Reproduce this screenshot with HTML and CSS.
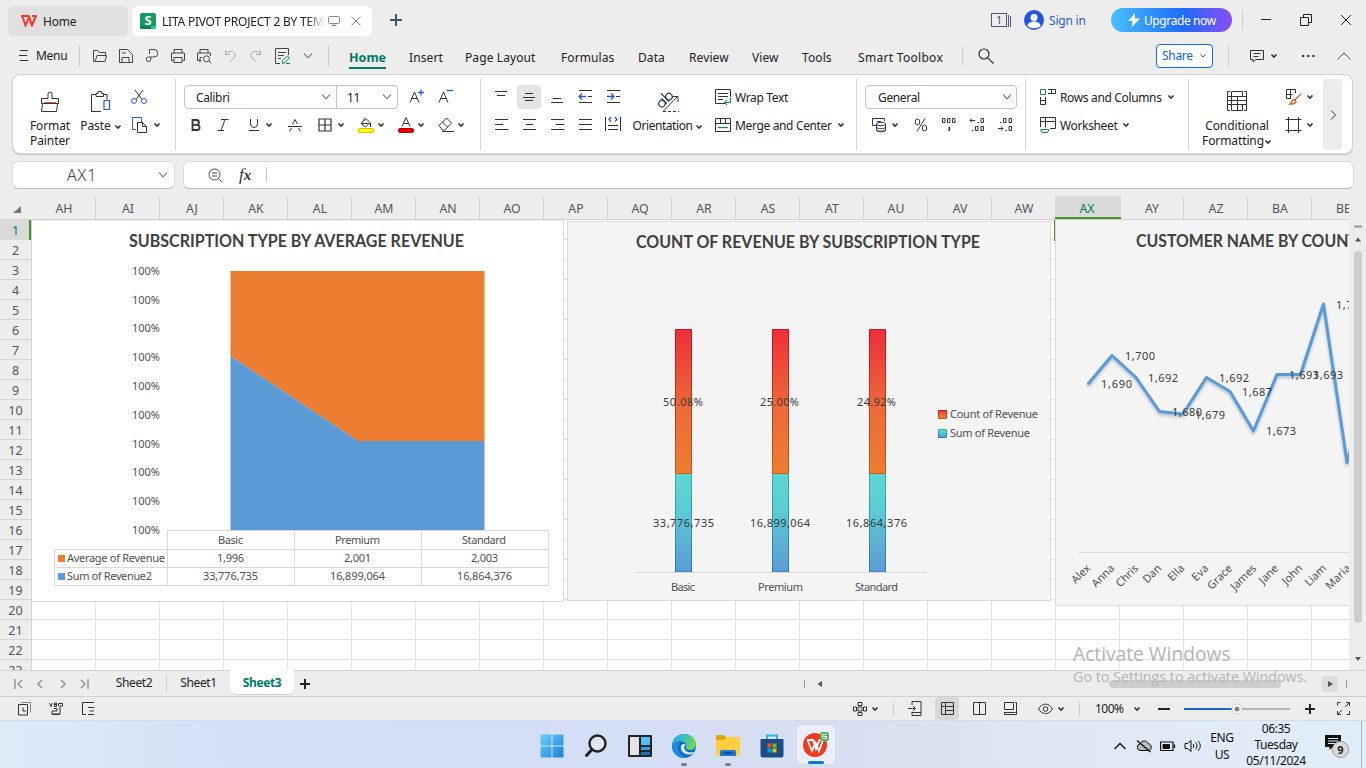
FILE: index.html
```html
<!DOCTYPE html>
<html lang="en">
<head>
<meta charset="utf-8">
<title>LITA PIVOT PROJECT 2</title>
<link rel="stylesheet" href="styles.css">
</head>
<body>
<svg class="defs" width="0" height="0">
  <defs>
    <symbol id="chev" viewBox="0 0 8 8"><path d="M1.500 2.500 4 5l2.500-2.500" fill="none" stroke="#333" stroke-width="1.600"/></symbol>
    <symbol id="drop" viewBox="0 0 10 8"><path d="M1 1.500 5 5.800 9 1.500" fill="none" stroke="#666" stroke-width="1.100"/></symbol>
    <linearGradient id="warm" x1="0" y1="0" x2="0" y2="1"><stop offset="0" stop-color="#ee2f3c"/><stop offset=".55" stop-color="#ec6b38"/><stop offset="1" stop-color="#ed7d31"/></linearGradient>
    <linearGradient id="cool" x1="0" y1="0" x2="0" y2="1"><stop offset="0" stop-color="#5bd6d3"/><stop offset=".3" stop-color="#5bd0d3"/><stop offset="1" stop-color="#5b9bd5"/></linearGradient>
    <linearGradient id="warmLine" x1="0" y1="0" x2="0" y2="1"><stop offset="0" stop-color="#c9101c"/><stop offset="1" stop-color="#c55a11"/></linearGradient>
    <linearGradient id="coolLine" x1="0" y1="0" x2="0" y2="1"><stop offset="0" stop-color="#2bb5b2"/><stop offset="1" stop-color="#2e75b6"/></linearGradient>
  </defs>
</svg>

<header class="titlebar">
  <div class="wtab home"><svg width="16" height="12" viewBox="0 0 16 12"><path d="M0 1h7.500M1.200 1l3.300 9.500L8.300 2l2.600 8.500L15 1h-4" fill="none" stroke="#f5392b" stroke-width="2"/></svg><span>Home</span></div>
  <div class="wtab doc">
    <svg width="16" height="16"><rect width="16" height="16" rx="2" fill="#149b64"/><path d="M0 13h11v3H2a2 2 0 0 1-2-2z" fill="#0b8453"/><path d="M11 13h5v1a2 2 0 0 1-2 2h-3z" fill="#2bc486"/><text x="8" y="12" text-anchor="middle" class="s-mark">S</text></svg>
    <span class="doc-name">LITA PIVOT PROJECT 2 BY TEMNI</span>
    <svg width="12" height="12" fill="none" stroke="#888"><rect x=".5" y="1.500" width="11" height="7" rx="1"/><path d="M3.500 10.500h5M6 8.500v2"/></svg>
    <svg class="tab-x" width="10" height="10" stroke="#888"><path d="M.5.5l9 9M9.500.5l-9 9"/></svg>
  </div>
  <div class="c"><svg width="12" height="12" stroke="#44546f" stroke-width="2"><path d="M6 0v12M0 6h12"/></svg></div>
  <i></i>
  <div class="c"><svg width="21" height="14" fill="none" stroke="#4b5b78"><rect x=".5" y=".5" width="15" height="13"/><path d="M17.500 2v12M19.500 3v11"/><text x="8" y="11" text-anchor="middle" class="cnt">1</text></svg></div>
  <div class="c"><svg width="20" height="20"><circle cx="10" cy="10" r="10" fill="#2454dc"/><circle cx="10" cy="7.500" r="3.500" fill="#fff"/><path d="M3.500 16c0-6 13-6 13 0-3 3-10 3-13 0z" fill="#fff"/></svg></div>
  <span class="signin">Sign in</span>
  <button class="upgrade"><svg width="12" height="14"><path d="M7 0 0 8h4.500L4 14l8-8.500H7z" fill="#fff"/></svg><span>Upgrade now</span></button>
  <div class="c"><b class="vr"></b></div>
  <div class="c"><svg width="10" height="12" stroke="#222"><path d="M0 5.500h10"/></svg></div>
  <div class="c"><svg width="12" height="12" fill="none" stroke="#222"><path d="M.5 3.500h8v8h-8zM3.500 3.500v-3h8v8h-3"/></svg></div>
  <div class="c"><svg width="10" height="10" stroke="#222"><path d="M0 0l10 10M10 0 0 10"/></svg></div>
</header>

<nav class="menubar">
  <div class="c"><svg width="10" height="13" stroke="#333"><path d="M1 1.500h8M0 6.500h8M1 11.500h8"/></svg></div>
  <span class="menu-t">Menu</span>
  <b class="vr"></b>
  <div class="quick">
    <svg width="16" height="16" viewBox="0 0 16 16"><path d="M3 13.500H1.500v-11h4l2 2h6v3M3 13.500l2-6h9.500l-1.500 6z"/></svg>
    <svg width="16" height="16" viewBox="0 0 16 16"><path d="M1.500 1.500h8l5 5v8h-13zM4 14.500v-5h7v5M4 5h4"/></svg>
    <svg width="16" height="16" viewBox="0 0 16 16"><path d="M5.500 6v-4.500H10a3.500 3.500 0 0 1 0 7.500H4.500a2.300 2.300 0 1 0 2.300 2.300V9"/></svg>
    <svg width="16" height="16" viewBox="0 0 16 16"><path d="M4 5V1.500h8V5M3.500 12.500h-2v-7.500h13v7.500h-2M4 9.500h8v5H4z"/></svg>
    <svg width="16" height="16" viewBox="0 0 16 16"><path d="M4 5V1.500h8V5M5 12.500H1.500V5h13v3M4 14.500V9.500h2M12.800 12.800l2.500 2.500"/><circle cx="10.500" cy="10.800" r="3"/></svg>
    <svg class="off" width="16" height="16" viewBox="0 0 16 16"><path d="M3.500 2v4.500H8M3.500 6.500c3-5 10-3.500 9.500 1-.3 3-3 4-5.500 6.500"/></svg>
    <svg class="off" width="16" height="16" viewBox="0 0 16 16"><path d="M12.500 2v4.500H8M12.500 6.500c-3-5-10-3.500-9.500 1 .3 3 3 4 5.500 6.500"/></svg>
    <svg width="16" height="16" viewBox="0 0 16 16"><path d="M14.500 7V.5h-13v15H6M4 4.500h8M4 7.500h6M4 10.500h3"/><path d="M8.500 15.500v-3l5-4.500 2 2-5 5zM12 15.500h4" stroke="#0c8a5c"/></svg>
    <svg width="10" height="8"><use href="#drop"/></svg>
  </div>
  <div class="c"><b class="vr"></b></div>
  <div class="tabs"><span class="on">Home</span><span>Insert</span><span>Page Layout</span><span>Formulas</span><span>Data</span><span>Review</span><span>View</span><span>Tools</span><span class="wide">Smart Toolbox</span></div>
  <div class="c"><b class="vr"></b></div>
  <div class="c"><svg width="16" height="16" fill="none" stroke="#333" stroke-width="1.200"><circle cx="6" cy="6" r="5"/><path d="M9.800 9.800 15.500 15.500"/></svg></div>
  <i></i>
  <button class="share"><span>Share</span><svg width="8" height="8" fill="none" stroke="#0b62e8"><path d="M1.500 2.500 4 5l2.500-2.500"/></svg></button>
  <div class="c"><b class="vr"></b></div>
  <div class="c"><svg width="16" height="16" fill="none" stroke="#333"><path d="M1.500 2.500h13v9H7l-3 2.500v-2.500H1.500zM4.500 5.500h7M4.500 8.500h5"/></svg></div>
  <div class="c"><svg width="8" height="8"><use href="#chev"/></svg></div>
  <div class="c"><svg width="13" height="4" fill="#333"><path d="M0 1h2.200v2H0zM5.200 1h2.200v2H5.200zM10.400 1h2.200v2h-2.200z"/></svg></div>
  <div class="c"><svg width="14" height="8" fill="none" stroke="#555"><path d="M.5 7.500 7 1l6.500 6.500"/></svg></div>
</nav>

<section class="ribbon">
  <div class="grp g-clip">
    <div class="big"><svg width="20" height="22" viewBox="0 0 20 22"><path d="M8 7.500V3a2 2 0 0 1 4 0v4.500h6.500v5h-17v-5zM2.500 12.500l-1 8h15l1-8"/><path d="M4 11.500h12" stroke="#d9622b"/></svg><span>Format<br>Painter</span></div>
    <div class="big"><svg width="20" height="22" viewBox="0 0 20 22"><path d="M5 3.500H.5v17H10M12 3.500h4v5M5 5.500h7.500v-3H10.500v-2H7v2H5z"/><path d="M13 9.500h5.500v9H13z" stroke="#1f5bd8" stroke-width="1.200"/></svg><span class="tp">Paste<svg class="gap3" width="8" height="8"><use href="#chev"/></svg></span></div>
    <div class="stack">
      <div class="r"><svg width="16" height="16" viewBox="0 0 16 16"><path d="M4 1l7 9.500M12 1 5 10.500"/><g stroke="#2c5bd6"><circle cx="3" cy="12" r="2.500"/><circle cx="13" cy="12" r="2.500"/></g></svg></div>
      <div class="r"><svg width="18" height="17" viewBox="0 0 18 17"><path d="M5 12.500H1.500v-12h9V5" stroke="#2c5bd6"/><path d="M6.500 5.500h5l4 4v6h-9zM11.500 5.500v4h4"/></svg><svg class="gap3" width="8" height="8"><use href="#chev"/></svg></div>
    </div>
  </div>
  <div class="grp g-font">
    <div class="r top">
      <div class="select font"><span>Calibri</span><svg width="10" height="8"><use href="#drop"/></svg></div><div class="select size"><span>11</span><svg width="10" height="8"><use href="#drop"/></svg></div>
      <div class="c"><svg width="16" height="16" viewBox="0 0 16 16"><path d="M1 13.500 5.500 3 10 13.500M2.500 9.500h6"/><path d="M9 3.500h6M12 .5v6" stroke="#1f5bd8" stroke-width="1.300"/></svg></div>
      <div class="c"><svg width="16" height="16" viewBox="0 0 16 16"><path d="M1 13.500 5.500 3 10 13.500M2.500 9.500h6"/><path d="M8.500 1.500h6.500" stroke="#1f5bd8" stroke-width="1.300"/></svg></div>
    </div>
    <div class="r row-font">
      <div class="c"><svg width="10" height="12"><path d="M1.500 1h4a2.300 2.300 0 0 1 0 4.800h-4zM1.500 5.800h4.500a2.500 2.500 0 0 1 0 5.200h-4.500z" stroke-width="1.800"/></svg></div>
      <div class="c"><svg width="12" height="12"><path d="M4 .5h7.500M.5 11.500H7M8 .5l-4 11"/></svg></div>
      <div class="c"><svg width="12" height="12"><path d="M2.500 0v5a3.500 3.500 0 0 0 7 0V0M1 11.500h10"/></svg></div>
      <div class="c"><svg width="8" height="8"><use href="#chev"/></svg></div>
      <div class="c"><svg width="14" height="13"><path d="M0 7.500h14M4.500 5 7 .5 9.500 5M3.500 9 1.500 12.500M10.500 9l2 3.500"/></svg></div>
      <div class="c"><svg width="14" height="14"><path d="M1 1h12v12H1zM7 1v12M1 7h12" stroke-width="1.200"/></svg></div>
      <div class="c"><svg width="8" height="8"><use href="#chev"/></svg></div>
      <div class="c"><svg width="16" height="16"><path d="M4 5l4-3.500 4 4-4.500 4.500L3.500 7zM6 4V1.500M12.500 6v4M3.500 6.500h8"/><rect x=".5" y="11.500" width="15" height="4" rx="1.500" fill="#ff0" stroke="#c8c800"/></svg></div>
      <div class="c"><svg width="8" height="8"><use href="#chev"/></svg></div>
      <div class="c"><svg width="16" height="16"><path d="M4 9.500 8 .5l4 9M5.500 6.500h5"/><rect x=".5" y="11.500" width="15" height="4" rx="1.500" fill="#f00000" stroke="#c00000"/></svg></div>
      <div class="c"><svg width="8" height="8"><use href="#chev"/></svg></div>
      <div class="c"><svg width="16" height="16"><path d="M1 8.500 8.500 1l5 5-6.500 7H4.500zM4.500 5l5 5M4 14.500h12"/></svg></div>
      <div class="c"><svg width="8" height="8"><use href="#chev"/></svg></div>
    </div>
  </div>
  <div class="grp g-align">
    <div class="aligns">
      <svg viewBox="-6 -6 24 24"><path d="M0 .5h12M2 4.500h8"/></svg>
      <svg class="sel" viewBox="-6 -6 24 24"><path d="M2 2.500h8M0 6.500h12M2 9.500h8"/></svg>
      <svg viewBox="-6 -6 24 24"><path d="M2 7.500h8M0 11.500h12"/></svg>
      <svg viewBox="-6 -6 24 24"><path d="M0-.5h13M9 5.500h4M0 11.500h13"/><path d="M7 5.500H0M3 2.500l-3 3 3 3" class="bl"/></svg>
      <svg viewBox="-6 -6 24 24"><path d="M0-.5h13M9 5.500h4M0 11.500h13"/><path d="M0 5.500h7M4 2.500l3 3-3 3" class="bl"/></svg>
      <svg viewBox="-6 -6 24 24"><path d="M0 .5h13M0 5.500h8M0 10.500h13"/></svg>
      <svg viewBox="-6 -6 24 24"><path d="M0 .5h13M3 5.500h7M0 10.500h13"/></svg>
      <svg viewBox="-6 -6 24 24"><path d="M0 .5h13M5 5.500h8M0 10.500h13"/></svg>
      <svg viewBox="-6 -6 24 24"><path d="M0 .5h13M0 5.500h13M0 10.500h13"/></svg>
      <svg viewBox="-6 -6 24 24"><path d="M-1.500-2v14M13.500-2v14M1 6.500h10M1 10.500h10"/><path d="M4-2 2 .500l2 2M8-2l2 2.500-2 2" class="bl"/></svg>
    </div>
    <div class="big"><svg width="24" height="22" viewBox="0 0 24 22" class="navy"><g transform="translate(6 14) rotate(-45)" stroke-width="1.200"><circle cx="1" cy="-1" r="3.300"/><path d="M4.300-5v7.500M7.500-9V2.500"/><circle cx="10.800" cy="-1" r="3.300"/></g><path d="M7 20.500 21 6M16.500 5.500H22V11"/><path d="M7 20.500h16" stroke-dasharray="3 2"/></svg><span class="ori">Orientation<svg class="gap3" width="8" height="8"><use href="#chev"/></svg></span></div>
    <div class="stack wm">
      <div class="r"><svg width="16" height="16"><path d="M10 14.500H.5V.5h15V8M3 4.500h10M3 7.500h10M3 10.500h5"/><path d="M15.500 9v4.500H10M12 11l-2.500 2.500L12 16" stroke="#0c8a5c"/></svg><span>Wrap Text</span></div>
      <div class="r"><svg width="16" height="14"><path d="M.5.5h15v13H.5zM.5 5.500h15M5.500.5v5M10.500.5v5"/><path d="M3 9.500h10" stroke="#0c8a5c" stroke-width="1.300"/></svg><span>Merge and Center</span><svg class="gap4" width="8" height="8"><use href="#chev"/></svg></div>
    </div>
  </div>
  <div class="grp g-num">
    <div class="r top"><div class="select gen"><span>General</span><svg width="10" height="8"><use href="#drop"/></svg></div></div>
    <div class="r row-num">
      <div class="c"><svg width="16" height="16" class="navy"><path d="M5 8.500H1.500v-7h12V4M6 4.500h4"/><ellipse cx="10" cy="7" rx="4.500" ry="1.800"/><path d="M5.500 7v6c0 2.300 9 2.300 9 0V7M5.500 10c0 2.300 9 2.300 9 0M5.500 12.500c0 2.300 9 2.300 9 0"/></svg></div>
      <div class="c"><svg width="8" height="8"><use href="#chev"/></svg></div>
      <div class="c"><svg width="14" height="14"><ellipse cx="3.500" cy="4" rx="2.300" ry="3"/><ellipse cx="10.500" cy="10" rx="2.300" ry="3"/><path d="M11 .5 3 13.500"/></svg></div>
      <div class="c"><svg width="16" height="16"><path d="M1.500 1.500h2.500v4H1.500zM6.500 1.500H9v4H6.500zM11.500 1.500H14v4h-2.500z"/><path d="M7.500 10.500h1v2l-1 1.500" stroke-width="1.500"/></svg></div>
      <div class="c"><svg width="16" height="16"><path d="M1 3.500h5M3 1.500l-2 2 2 2M8.500 5.500h1.500M12 1.500h2.500v4H12zM3 13.500h1.500M6.500 9.500h2.500v4H6.500zM12 9.500h2.500v4H12z"/></svg></div>
      <div class="c"><svg width="16" height="16"><path d="M3 5.500h1.500M6.500 1.500h2.500v4H6.500zM12 1.500h2.500v4H12zM1 11.500h5M4 9.500l2 2-2 2M8.500 13.500h1.500M12 9.500h2.500v4H12z"/></svg></div>
    </div>
  </div>
  <div class="grp g-rows">
    <div class="stack">
      <div class="r"><svg width="16" height="16"><path d="M.5.5h5v5h-5z" stroke="#0c8a5c"/><path d="M8 .5h7.500v4H8M11.500.5v4M.5 8v7.500h5V8M.5 11.500h5"/></svg><span>Rows and Columns</span><svg class="gap4" width="8" height="8"><use href="#chev"/></svg></div>
      <div class="r"><svg width="16" height="16"><path d="M.5 10V.5h15v11H10M.5 4.500h15M5.500.5v10"/><path d="M.5 12.500h8.500l-1.500 3H2z" stroke="#0c8a5c"/></svg><span>Worksheet</span><svg class="gap4" width="8" height="8"><use href="#chev"/></svg></div>
    </div>
  </div>
  <div class="grp g-cond">
    <div class="big"><svg width="20" height="20"><path d="M3 .5H.5v19H3M17 .5h2.500v19H17M4.500.5h11v5h-11zM4.500 5.500v8M4.500 9.500h15M.5 5.500h4M15.500 5.500h4M10.500 5.500v8M.5 13.500h19M4.500 13.500h11v6h-11zM10.500 13.500v6M.5 9.500h4"/></svg><span class="cf">Conditional<br>Formatting<svg width="8" height="8"><use href="#chev"/></svg></span></div>
    <div class="stack">
      <div class="r"><svg width="17" height="16"><path d="M6 9.500H1.500v-9h9V4M1.500 5.500h6M5.500.5v9"/><path d="M16 5 9.500 11M9 10.500l2 2c-1 3-3.500 2.500-6 2.500 1.500-1 1.500-4 4-4.500z" stroke="#cf6128" stroke-width="1.300"/></svg><svg class="gap3" width="8" height="8"><use href="#chev"/></svg></div>
      <div class="r"><svg width="17" height="16"><path d="M.5 2.500h16M.5 13.500h16M3.500 0v16M13.500 0v16"/></svg><svg class="gap3" width="8" height="8"><use href="#chev"/></svg></div>
    </div>
    <div class="more"><svg width="6" height="10"><path d="M1 .5 5.500 5 1 9.500"/></svg></div>
  </div>
</section>

<section class="formula">
  <div class="box namebox"><span>AX1</span><svg width="10" height="8"><use href="#drop"/></svg></div>
  <div class="box fx"><svg width="15" height="15" fill="none" stroke="#444"><circle cx="6.500" cy="6.500" r="5.500"/><path d="M10.500 10.500 14 14M4 5h5M4 8h5"/></svg><em>f<b>x</b></em><i></i></div>
</section>

<section class="colhead">
  <div class="corner"><svg width="8" height="8"><path d="M8 1v7H0z" fill="#777"/></svg></div>
  <span>AH</span><span>AI</span><span>AJ</span><span>AK</span><span>AL</span><span>AM</span><span>AN</span><span>AO</span><span>AP</span><span>AQ</span><span>AR</span><span>AS</span><span>AT</span><span>AU</span><span>AV</span><span>AW</span><span class="sel">AX</span><span>AY</span><span>AZ</span><span>BA</span><span>BB</span>
</section>

<main class="sheet">
  <div class="rowhead"><span class="sel">1</span><span>2</span><span>3</span><span>4</span><span>5</span><span>6</span><span>7</span><span>8</span><span>9</span><span>10</span><span>11</span><span>12</span><span>13</span><span>14</span><span>15</span><span>16</span><span>17</span><span>18</span><span>19</span><span>20</span><span>21</span><span>22</span><span>23</span></div>
  <div class="cells">
    <svg class="chart area" width="532" height="382" viewBox="32 220 532 382">
      <path d="M32 220h531.500v381.500H32" fill="#fff" stroke="#d9d9d9"/>
      <text class="title" x="129" y="247" textLength="335" lengthAdjust="spacingAndGlyphs">SUBSCRIPTION TYPE BY AVERAGE REVENUE</text>
      <g class="lab"><text x="132" y="275" textLength="28">100%</text><text x="132" y="304" textLength="28">100%</text><text x="132" y="332" textLength="28">100%</text><text x="132" y="361" textLength="28">100%</text><text x="132" y="390" textLength="28">100%</text><text x="132" y="419" textLength="28">100%</text><text x="132" y="448" textLength="28">100%</text><text x="132" y="476" textLength="28">100%</text><text x="132" y="505" textLength="28">100%</text><text x="132" y="534" textLength="28">100%</text></g>
      <path d="M230.500 271h254v170H358L230.500 356z" fill="#ed7d31"/>
      <path d="M230.500 356 358 441h126.500v89h-254z" fill="#5b9bd5"/>
      <path d="M167.500 585.500v-55h381v55h-494v-36h494M54.500 567.500h494M294.500 530v55M421.500 530v55" fill="none" stroke="#d9d9d9"/>
      <path d="M58 555h7v7h-7z" fill="#ed7d31"/><path d="M58 573h7v7h-7z" fill="#5b9bd5"/>
      <g class="lab">
        <text x="218" y="544" textLength="25">Basic</text><text x="335" y="544" textLength="45">Premium</text><text x="462" y="544" textLength="44">Standard</text>
        <text x="67" y="562" textLength="98">Average of Revenue</text><text x="217" y="562" textLength="27">1,996</text><text x="344" y="562" textLength="27">2,001</text><text x="471" y="562" textLength="27">2,003</text>
        <text x="67" y="580" textLength="85">Sum of Revenue2</text><text x="203" y="580" textLength="55">33,776,735</text><text x="330" y="580" textLength="55">16,899,064</text><text x="457" y="580" textLength="55">16,864,376</text>
      </g>
    </svg>
    <svg class="chart bars" width="485" height="381" viewBox="567 220 485 381">
      <path d="M567.500 221.500h483v379h-483z" fill="#f4f4f4" stroke="#d9d9d9"/>
      <text class="title" x="636" y="248" textLength="344" lengthAdjust="spacingAndGlyphs">COUNT OF REVENUE BY SUBSCRIPTION TYPE</text>
      <g fill="url(#cool)" stroke="url(#coolLine)"><path d="M675.500 473.500h16v98.500h-16zM772.500 473.500h16v98.500h-16zM869.500 473.500h16v98.500h-16z"/></g>
      <g fill="url(#warm)" stroke="url(#warmLine)"><path d="M675.500 329.500h16v144h-16zM772.500 329.500h16v144h-16zM869.500 329.500h16v144h-16z"/></g>
      <path d="M635 572.500h291" stroke="#d9d9d9"/>
      <g class="lab dark">
        <text x="663" y="406" textLength="40">50.08%</text><text x="760" y="406" textLength="39">25.00%</text><text x="857" y="406" textLength="39">24.92%</text>
        <text x="653" y="527" textLength="61">33,776,735</text><text x="750" y="527" textLength="60">16,899,064</text><text x="846" y="527" textLength="61">16,864,376</text>
      </g>
      <g class="lab">
        <text x="671" y="591" textLength="24">Basic</text><text x="758" y="591" textLength="45">Premium</text><text x="855" y="591" textLength="43">Standard</text>
        <text x="950" y="418" textLength="88">Count of Revenue</text><text x="950" y="437" textLength="80">Sum of Revenue</text>
      </g>
      <path d="M938.500 410.500h8v8h-8z" fill="url(#warm)" stroke="url(#warmLine)"/><path d="M938.500 429.500h8v8h-8z" fill="url(#cool)" stroke="url(#coolLine)"/>
    </svg>
    <svg class="chart line" width="294" height="386" viewBox="1055 220 294 386">
      <path d="M1055.500 220v385.500H1349V220z" fill="#f4f4f4"/><path d="M1055.500 220v385.500H1349" fill="none" stroke="#d9d9d9"/>
      <path d="M1054.500 220v21" stroke="#43951f"/>
      <text class="title" x="1136" y="247" textLength="358" lengthAdjust="spacingAndGlyphs">CUSTOMER NAME BY COUNT OF CUSTOMER ID</text>
      <path class="series" d="M1088.500 383.500 1112 355.500 1136 377.500 1159.500 411.500 1183 414 1206.500 377.500 1230 391.500 1253.500 431 1277 374.500H1300.500L1323.500 304 1347 462.500 1371 380"/>
      <g class="lab dark">
        <text x="1125" y="360" textLength="30">1,700</text><text x="1101" y="388" textLength="31">1,690</text><text x="1148" y="382" textLength="30">1,692</text><text x="1172" y="416" textLength="30">1,680</text><text x="1195" y="419" textLength="30">1,679</text><text x="1219" y="382" textLength="30">1,692</text><text x="1242" y="396" textLength="30">1,687</text><text x="1266" y="435" textLength="30">1,673</text><text x="1289" y="379" textLength="30">1,693</text><text x="1313" y="379" textLength="30">1,693</text><text x="1336" y="309" textLength="30">1,718</text>
      </g>
      <path d="M1078 552.500h271" stroke="#d9d9d9"/>
      <g class="lab names">
        <text transform="translate(1091 569) rotate(-45)">Alex</text><text transform="translate(1115 569) rotate(-45)">Anna</text><text transform="translate(1139 569) rotate(-45)">Chris</text><text transform="translate(1162 569) rotate(-45)">Dan</text><text transform="translate(1185 569) rotate(-45)">Ella</text><text transform="translate(1209 569) rotate(-45)">Eva</text><text transform="translate(1233 569) rotate(-45)">Grace</text><text transform="translate(1257 569) rotate(-45)">James</text><text transform="translate(1279 569) rotate(-45)">Jane</text><text transform="translate(1303 569) rotate(-45)">John</text><text transform="translate(1327 569) rotate(-45)">Liam</text><text transform="translate(1351 569) rotate(-45)">Maria</text>
      </g>
    </svg>
  </div>
  <div class="vscroll"><svg width="17" height="450"><path d="M5 6.500h8" stroke="#999" stroke-width="2"/><path d="M6 21.500l3-4 3 4zM6 437l3 4 3-4z" fill="#555"/><rect x="5" y="31" width="8" height="372" rx="4" fill="#cdcdcd"/></svg></div>
</main>

<section class="sheetbar">
  <div class="c"><svg width="9" height="10" class="nv"><path d="M1 0v10M8 1 4 5l4 4"/></svg></div>
  <div class="c"><svg width="6" height="10" class="nv"><path d="M5 1 1 5l4 4"/></svg></div>
  <div class="c"><svg width="6" height="10" class="nv"><path d="M1 1l4 4-4 4"/></svg></div>
  <div class="c"><svg width="9" height="10" class="nv"><path d="M8 0v10M1 1l4 4-4 4"/></svg></div>
  <i></i>
  <span class="st">Sheet2</span><span class="st sep">Sheet1</span><span class="st on">Sheet3</span>
  <div class="c"><svg width="10" height="10" stroke="#222" stroke-width="2"><path d="M5 0v10M0 5h10"/></svg></div>
  <i></i>
  <svg class="hs" width="562" height="26" viewBox="804 670 562 26"><path d="M804.500 679v8M1346.500 679v8" stroke="#999"/><path d="M822 680l-4.500 3 4.500 3z" fill="#555"/><rect x="1109" y="679" width="172" height="8" rx="4" fill="#cdcdcd"/><rect x="1322" y="675" width="16" height="16" rx="3" fill="#dcdcdc"/><path d="M1328 680l5 3-5 3z" fill="#555"/></svg>
</section>

<section class="status">
  <div class="c"><svg width="13" height="15"><path d="M.5 3.500h9v10.500h-9zM5 6.500v3.500h3"/><path d="M3 1.500h9.500v10" stroke="#888"/></svg></div>
  <div class="c"><svg width="14" height="14"><path d="M.5 1 2 4.500 3.500 1M5.500 1v3.500h2V1zM5.500 2.500h2M9.500 4V1.500h4v2.500h-2.500v8h-8v-3h5v-2.500h-3M3 12.500h8"/></svg></div>
  <div class="c"><svg width="13" height="13"><path d="M12 .5H.5v12H4M6 5.500h6M7.500 9h4.500M6 12.500h6"/></svg></div>
  <i></i>
  <div class="c"><svg width="14" height="14"><path d="M5 .5h4v3H5zM5 10.500h4v3H5zM.5 5h3v4h-3zM10.500 5h3v4h-3zM5 5h4v4H5z"/></svg></div>
  <div class="c"><svg width="8" height="8"><use href="#chev"/></svg></div>
  <div class="c"><b class="vr s"></b></div>
  <div class="c"><svg width="14" height="15"><path d="M4 4V.5h9v14H4V11M0 7.500h7M5 5l2.500 2.500L5 10M4 11.500h9"/></svg></div>
  <div class="c hot"><svg width="13" height="13"><path d="M.5.5h12v12H.5zM.5 4.500h12M4.500.5v12M4.500 8.500h8" /></svg></div>
  <div class="c"><svg width="13" height="13"><path d="M.5.5h12v12H.5zM6.500.5v12"/></svg></div>
  <div class="c"><svg width="14" height="13"><path d="M.5.5h9v7h-9zM.5 10v2.500h12V.5H11M.5 10.500h11"/></svg></div>
  <div class="c"><svg width="15" height="12"><path d="M.5 6C4-.5 11-.5 14.500 6 11 12 4 12 .5 6z"/><circle cx="7.500" cy="6" r="2.300"/></svg></div>
  <div class="c"><svg width="8" height="8"><use href="#chev"/></svg></div>
  <div class="c"><b class="vr s"></b></div>
  <span class="zoom">100%</span>
  <div class="c"><svg width="8" height="8"><use href="#chev"/></svg></div>
  <div class="c"><svg width="12" height="12" class="bold"><path d="M0 6h12"/></svg></div>
  <div class="c"><svg width="106" height="14"><path d="M0 7h53" stroke="#1c62d1" stroke-width="2"/><path d="M53 7h53" stroke="#b4b4b4" stroke-width="2"/><circle cx="53" cy="7" r="5" fill="#fff" stroke="#ccc"/><circle cx="53" cy="7" r="2.500" fill="#888" stroke="none"/></svg></div>
  <div class="c"><svg width="10" height="10" class="bold"><path d="M0 5h10M5 0v10"/></svg></div>
  <div class="c"><svg width="13" height="13"><path d="M.5 3.500v-3h3M9 .5h3.500v3.500M12.500 9v3.500H9.500M4 12.500H.5V9M12 1 8 5M1 12l4-4"/></svg></div>
</section>

<footer class="taskbar">
  <i></i>
  <div class="apps">
    <div class="c"><svg width="24" height="24"><defs><linearGradient id="win" gradientUnits="userSpaceOnUse" x1="0" y1="0" x2="24" y2="24"><stop offset="0" stop-color="#6bd0f8"/><stop offset="1" stop-color="#1a80d8"/></linearGradient></defs><path d="M.5.5h11v11H.5zM12.500.5h11v11h-11zM.5 12.500h11v11H.5zM12.500 12.500h11v11h-11z" fill="url(#win)"/></svg></div>
    <div class="c"><svg width="24" height="24" fill="none"><circle cx="13.500" cy="9.500" r="8" stroke="#222" stroke-width="2.400" fill="#e2e5ee"/><path d="M8 15.500 2.500 21.500" stroke="#222" stroke-width="3" stroke-linecap="round"/></svg></div>
    <div class="c"><svg width="24" height="22"><rect width="24" height="22" rx="1" fill="#242424"/><path d="M2 2h9v18H2z" fill="#e4e4e4"/><path d="M13 2h9v8h-9z" fill="#4fc3f7"/><path d="M13 12h9v3h-9z" fill="#2f9fe8"/><path d="M13 17h9v3h-9z" fill="#1a6fc0"/></svg></div>
    <div class="c run"><svg width="24" height="24"><defs><linearGradient id="edge" x1="0" y1="0" x2="1" y2=".3"><stop offset="0" stop-color="#27a7dd"/><stop offset=".5" stop-color="#35c1c7"/><stop offset="1" stop-color="#6bd552"/></linearGradient></defs><circle cx="12" cy="12" r="12" fill="#0e6cc4"/><path d="M0 11C1 4 6 0 12 0c7 0 12 5 12 10 0 4-3 6-6 6-3 0-4.500-1.500-4-3C16 8 6 4 0 11z" fill="url(#edge)"/><path d="M9.500 11C7 15 11 21 18 20.500c2 0 4-1.500 4.500-2.500-.5 0-8 2-10-3-1-2 .5-4 1.500-4-1.500-1.500-3.500-1.200-4.500 0z" fill="#e0e9f6"/><path d="M8 9c-5 4-1 14 8 14.300C8 26 0 20 0 12c1-3 4-5 8-3z" fill="#1d8ede"/></svg><b></b></div>
    <div class="c run"><svg width="26" height="24"><path d="M1 2a1 1 0 0 1 1-1h7l2 2h13v5H1z" fill="#e0a30c"/><path d="M1 6h8l3-3h12a1 1 0 0 1 1 1v18H1z" fill="#ffce3d"/><path d="M5 22v-4a2 2 0 0 1 2-2h12a2 2 0 0 1 2 2v4z" fill="#1579cf"/><path d="M9 19h8" stroke="#084f9b" stroke-width="2"/></svg><b></b></div>
    <div class="c"><svg width="24" height="24"><path d="M7 6V1.500h10V6" fill="none" stroke="#31b0e9" stroke-width="2"/><path d="M.5 5h23v16a2.500 2.500 0 0 1-2.500 2.500H3A2.500 2.500 0 0 1 .5 21z" fill="#1a4d86"/><path d="M7.500 9.500h4v4h-4z" fill="#f25022"/><path d="M12.500 9.500h4v4h-4z" fill="#7fba00"/><path d="M7.500 14.500h4v4h-4z" fill="#00a4ef"/><path d="M12.500 14.500h4v4h-4z" fill="#ffb900"/></svg></div>
    <div class="c run act"><svg width="28" height="26"><circle cx="13" cy="14" r="12" fill="#f4371f"/><path d="M5 9h6l3 9 3.500-9h3M5.500 9l4.500 11 3.500-8.500L17 20l4-11" fill="none" stroke="#fff" stroke-width="1.800"/><rect x="18" y="1" width="9" height="9" rx="2" fill="#4fb861"/><path d="M24.500 3.500h-4v2h4v2h-4" fill="none" stroke="#fff"/></svg><b></b></div>
  </div>
  <i></i>
  <div class="c"><svg width="12" height="8" fill="none" stroke="#111" stroke-width="1.300"><path d="M.5 7 6 1.500 11.500 7"/></svg></div>
  <div class="c"><svg width="16" height="14" fill="#bbb" stroke="#111"><path d="M4 11.500a3.300 3.300 0 0 1 0-6.500c1.500-4 7-4 8-.5 4 .5 4.500 6.500.5 7z"/><path d="M1 1.500 14.500 13" stroke-width="1.400"/></svg></div>
  <div class="c"><svg width="16" height="10" fill="none" stroke="#111"><path d="M.5 1h12.500v8.500H.5zM14.500 3.500v3.500" stroke-width="1.200"/><path d="M3 3.500h6.500v4H3z" fill="#111"/></svg></div>
  <div class="c"><svg width="17" height="14" fill="none" stroke="#111"><path d="M1 4.500h2.500L7 1.500v11L3.500 9.500H1zM9 5c1 1.200 1 2.800 0 4M11.500 3.500c2 2 2 5 0 7M14 2c3 3 3 7 0 10"/></svg></div>
  <div class="lang">ENG<br>US</div>
  <div class="clock">06:35<br>Tuesday<br>05/11/2024</div>
  <div class="c note"><svg width="26" height="24"><path d="M1 1h16v12H9l-3.500 3v-3H1z" fill="#111"/><path d="M4 4.500h10M4 7h10M4 9.500h7" stroke="#e4edf8"/><circle cx="16.500" cy="15.500" r="8" fill="#dcdcdc" stroke="#999"/><text x="16.500" y="19.500" text-anchor="middle" class="nine">9</text></svg></div>
  <b class="desk"></b>
</footer>

<div class="activate"><p>Activate Windows</p><small>Go to Settings to activate Windows.</small></div>
</body>
</html>
```
FILE: styles.css
```css
* { box-sizing: border-box; }
body { margin: 0; width: 1366px; height: 768px; overflow: hidden; display: flex; flex-direction: column; background: #ededed; color: #222; font: 12px/15px "Noto Sans", "Open Sans", sans-serif; position: relative; }
.defs { position: absolute; }
svg { display: block; flex: none; }
span { white-space: nowrap; }
button { border: 0; padding: 0; font: inherit; }
.c { display: flex; align-items: center; justify-content: center; }
.vr { display: block; width: 1px; height: 20px; background: #cbcbcb; }

/* Window title bar */
.titlebar { height: 40px; flex: none; display: grid; align-items: center; padding-left: 8px; grid-template-columns: 120px 244px 47px 1fr 40px 26px 64px 121px 20px 28px 52px 28px 6px; }
.wtab { height: 30px; margin-top: 2px; border-radius: 6px; display: flex; align-items: center; }
.wtab.home { background: #e0e0e0; padding-left: 13px; gap: 6px; letter-spacing: -.2px; }
.wtab.doc { background: #fff; margin-left: 4px; padding-left: 8px; width: 240px; }
.doc-name { width: 161px; margin: 0 5px 0 6px; overflow: hidden; letter-spacing: -.22px; -webkit-mask-image: linear-gradient(90deg, #000 145px, transparent 163px); }
.tab-x { margin-left: 11px; }
.s-mark { font: bold 13px "Open Sans", sans-serif; fill: #fff; }
.cnt { font: 10px "Noto Sans", sans-serif; fill: #33445f; stroke: none; }
.signin { color: #1f5cc8; padding-left: 2px; letter-spacing: -.2px; }
.upgrade { height: 24px; border-radius: 12px; background: linear-gradient(90deg, #46bfff, #1e6bff 60%, #8a4df7); color: #fff; display: flex; align-items: center; padding-left: 17px; gap: 4px; letter-spacing: -.4px; }

/* Menu row */
.menubar { height: 34px; flex: none; display: grid; align-items: center; padding: 0 0 3px 13px; grid-template-columns: 22px 44px 8px 234px 14px 614px 26px 22px 1fr 57px 30px 28px 6px 62px 10px 17px; }
.menu-t { padding-left: 1px; letter-spacing: -.3px; }
.quick { display: grid; grid-template-columns: repeat(9, 26px); justify-items: center; align-items: center; fill: none; stroke: #444; }
.quick .off { stroke: #aaa; }
.tabs { display: grid; padding-left: 14px; margin-top: 2px; grid-template-columns: 60px 56px 96px 77px 51px 63px 50px 56px 90px; letter-spacing: .1px; }
.tabs span { margin-top: 5px; }
.tabs .on { color: #00796b; font-weight: bold; font-size: 12.5px; border-bottom: 2px solid #00796b; width: 37px; height: 19px; letter-spacing: 0; }
.tabs .wide { letter-spacing: .3px; }
.share { height: 24px; border: 1px solid #0b6cf5; border-radius: 4px; background: #fff; color: #0b62e8; display: flex; align-items: center; justify-content: space-between; padding: 0 5px; letter-spacing: -.3px; }

/* Ribbon */
.ribbon { height: 80px; flex: none; margin: 0 13px 0 12px; background: #fff; border: 1px solid #d2d2d2; border-radius: 8px; box-shadow: 0 1px 1px #c8c8c8; display: grid; grid-template-columns: 163px 305px 376px 169px 163px 1fr; letter-spacing: -.35px; }
.ribbon svg { fill: none; stroke: #333; }
.ribbon .navy { stroke: #2f3b55; }
.grp { margin: 4px 0; height: 71px; border-right: 1px solid #d5d5d5; }
.big { display: flex; flex-direction: column; align-items: center; text-align: center; padding-top: 12px; }
.big > svg { height: 22px; }
.big > span { margin-top: 5px; }
.g-clip .big > span, .big .cf { letter-spacing: -.1px; }
.big .tp { letter-spacing: -.4px; }
.big .ori { letter-spacing: -.45px; }
.big span svg { display: inline-block; vertical-align: -1px; }
.r { display: flex; align-items: center; height: 28px; }
.stack { padding-top: 4px; }
.gap3 { margin-left: 4px; }
.big .gap3 { margin-left: 3px; }
.gap4 { margin-left: 5px; }
.stack span { margin-left: 4px; }
.g-clip { display: grid; grid-template-columns: 60px 42px 53px; padding-left: 7px; }
.g-clip .stack { padding-left: 9px; }
.g-font, .g-num { padding: 4px 0 0 8px; }
.select { height: 24px; border: 1px solid #c2c2c2; border-radius: 4px; display: flex; align-items: center; justify-content: space-between; padding: 0 5px 0 11px; }
.select.font { width: 153px; border-radius: 4px 0 0 4px; }
.select.size { width: 61px; border-left: 0; border-radius: 0 4px 4px 0; padding-left: 10px; }
.select.gen { width: 152px; padding-left: 12px; padding-right: 4px; }
.g-font .top { display: grid; grid-template-columns: 153px 61px 38px 20px; }
.row-font { display: flex; }
.row-font .c { width: 24px; }
.row-font .c:nth-child(2) { margin-left: 3px; }
.row-font .c:nth-child(3) { margin-left: 7px; }
.row-font .c:nth-child(4), .row-font .c:nth-child(7), .row-font .c:nth-child(9), .row-font .c:nth-child(11), .row-font .c:nth-child(13) { width: 8px; }
.row-font .c:nth-child(4) { margin-left: -1px; }
.row-font .c:nth-child(5) { margin-left: 10px; }
.row-font .c:nth-child(6) { margin-left: 6px; }
.row-font .c:nth-child(8) { margin-left: 9px; }
.row-font .c:nth-child(9), .row-font .c:nth-child(11), .row-font .c:nth-child(13) { margin-left: -1px; }
.row-font .c:nth-child(10), .row-font .c:nth-child(12) { margin-left: 9px; }
.g-align { display: grid; grid-template-columns: 146px 82px 147px; }
.aligns { display: grid; grid-template-columns: repeat(5, 28px); grid-auto-rows: 28px; padding: 4px 0 0 6px; place-items: center; height: 60px; }
.aligns svg { width: 24px; height: 24px; }
.aligns .sel { background: #e4e4e4; border-radius: 4px; }
.ribbon .bl { stroke: #2458e0; stroke-width: 1.3; }
.wm { padding-left: 6px; }
.row-num { display: flex; }
.row-num .c { width: 28px; }
.row-num .c:nth-child(2) { width: 8px; margin-left: -2px; }
.row-num .c:nth-child(3) { margin-left: 8px; }
.g-rows .stack { padding-left: 14px; }
.g-cond { border: 0; display: grid; grid-template-columns: 96px 38px 20px; }
.more { background: #ececec; border-radius: 4px; display: flex; align-items: center; justify-content: center; width: 19px; }

/* Formula bar */
.formula { height: 42px; flex: none; display: flex; gap: 8px; padding: 7px 12px 7px; }
.box { height: 28px; background: #fff; border: 1px solid #dadada; border-bottom-color: #bbb; border-radius: 6px; display: flex; align-items: center; }
.namebox { width: 163px; padding: 0 6px 0 54px; justify-content: space-between; font: 300 16px "Open Sans", sans-serif; letter-spacing: 1px; }
.fx { width: 1171px; padding-left: 24px; }
.fx em { font: italic 17px "Liberation Serif", serif; margin-left: 16px; width: 27px; color: #333; }
.fx em b { font-size: 15px; }
.fx i { width: 1px; height: 16px; background: #ccc; }

/* Sheet */
.colhead { height: 24px; flex: none; width: 1349px; overflow: hidden; display: grid; grid-template-columns: 32px repeat(21, 64px); border-bottom: 1px solid #d2d2d2; color: #555; }
.colhead span { display: flex; align-items: center; justify-content: center; border-right: 1px solid #d6d6d6; padding: 1px 0 0 1px; font-size: 12.3px; }
.colhead .sel { background: #d9d9d9; color: #00796b; border: 0; border-bottom: 2px solid #43951f; margin: 0 -1px; padding: 3px 2px 0 0; }
.corner { display: flex; align-items: center; padding: 2px 0 0 13px; }
.sheet { height: 451px; flex: none; display: grid; grid-template-columns: 32px 1317px 17px; overflow: hidden; border-bottom: 1px solid #d2d2d2; }
.rowhead { height: 450px; overflow: hidden; border-right: 1px solid #d2d2d2; color: #555; }
.rowhead span { display: block; height: 20px; line-height: 22px; text-align: center; border-bottom: 1px solid #d6d6d6; font-size: 12.5px; }
.rowhead .sel { background: #d9d9d9; color: #00796b; border-right: 2px solid #43951f; padding-left: 2px; border-bottom: 0; }
.cells { position: relative; overflow: hidden; background-color: #fff; background-image: linear-gradient(90deg, transparent 63px, #e2e2e2 63px), linear-gradient(transparent 19px, #e2e2e2 19px); background-size: 64px 100%, 100% 20px; }
.chart { position: absolute; top: 0; overflow: hidden; }
.area { left: 0; }
.bars { left: 535px; }
.line { left: 1023px; overflow: visible; }
.title { font: bold 16.5px Lato, sans-serif; fill: #404040; }
.lab { font: 11px "Noto Sans", sans-serif; fill: #505050; }
.dark { fill: #3a3a3a; }
.names { text-anchor: end; }
.series { fill: none; stroke: #5b9bd5; stroke-width: 3; stroke-linejoin: round; stroke-linecap: round; filter: drop-shadow(0 2px 1.5px rgba(91, 120, 160, .45)); }

/* Sheet tabs and status bar */
.sheetbar { height: 26px; flex: none; border-bottom: 1px solid #d0d0d0; display: grid; grid-template-columns: 22px 22px 23px 21px 7px 64px 64px 64px 22px 1fr 562px; padding-left: 7px; align-items: center; }
.nv { fill: none; stroke: #999; stroke-width: 1.6; }
.st { text-align: center; line-height: 24px; height: 24px; align-self: start; letter-spacing: -.4px; }
.st.sep { border-left: 1px solid #cdcdcd; height: 18px; line-height: 18px; margin-top: 3px; }
.st.on { color: #00796b; font-weight: bold; background: #fff; border-radius: 0 0 6px 6px; margin-top: -1px; height: 25px; line-height: 26px; border-bottom: 1px solid #d2d2d2; }
.status { height: 23px; flex: none; display: grid; align-items: center; padding-left: 8px; fill: none; stroke: #333; grid-template-columns: 32px 32px 32px 1fr 22px 8px 28px 16px 48px 16px 48px 20px 12px 24px 36px 20px 34px 112px 34px 32px 7px; }
.status .bold { stroke: #222; stroke-width: 2; }
.vr.s { height: 14px; }
.hot { height: 23px; width: 24px; background: #d8d8d8; border-radius: 4px; justify-self: center; }
.zoom { stroke: none; padding-left: 4px; letter-spacing: -.5px; }

/* Taskbar */
.taskbar { height: 48px; flex: none; display: grid; grid-template-columns: 530px 308px 1fr 24px 24px 24px 24px 36px 72px 42px 12px; border-top: 1px solid #d3dcea; background: linear-gradient(90deg, #dcebf8 0, #d2dff5 20%, #d4def5 45%, #d8dff0 62%, #dfe9f5 80%, #e1edf9); color: #111; }
.apps { display: grid; grid-template-columns: repeat(7, 44px); }
.apps .c { position: relative; }
.apps svg { margin-bottom: 1px; }
.run b { position: absolute; bottom: 5px; left: 19px; width: 6px; height: 3px; border-radius: 2px; background: #7b8088; }
.act { background: #eceff9; border-radius: 4px; width: 38px; height: 39px; justify-self: center; margin-top: 4px; box-shadow: 0 0 1px #aab; }
.act b { left: 11px; bottom: 0; width: 16px; background: #0a78d4; }
.lang, .clock { align-self: center; text-align: center; font-size: 12px; line-height: 17px; letter-spacing: -.4px; padding-bottom: 1px; }
.clock { line-height: 16px; letter-spacing: -.45px; padding-bottom: 2px; }
.note { padding-left: 8px; }
.nine { font: bold 11px "Noto Sans", sans-serif; fill: #222; }
.desk { border-left: 1px solid #aab4c0; margin-left: 7px; }

/* Activation watermark */
.activate { position: absolute; left: 1073px; top: 641px; color: #b4b4b4; font-family: "Open Sans", sans-serif; white-space: nowrap; }
.activate p { margin: 0; font-size: 19.2px; line-height: 25px; }
.activate small { display: block; font-size: 14.3px; line-height: 21px; }
```
